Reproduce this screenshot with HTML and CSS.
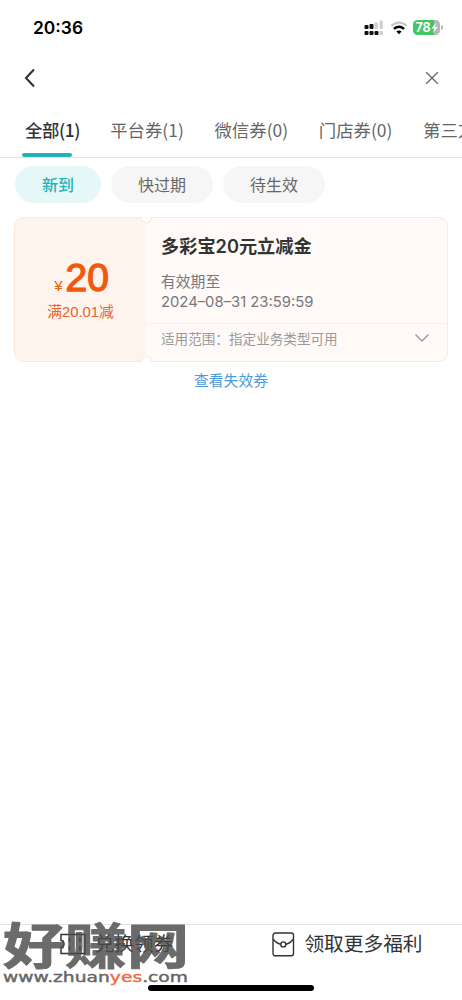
FILE: index.html
```html
<!DOCTYPE html>
<html lang="zh-CN">
<head>
<meta charset="UTF-8">
<title>卡券</title>
<link rel="stylesheet" href="styles.css">
</head>
<body>
<div class="screen">
  <header class="status">
    <span class="clock">20:36</span>
    <div class="indicators">
      <svg class="signal" width="20" height="16" viewBox="0 0 20 16">
        <g fill="#111"><rect x="0.5" y="5" width="4" height="4" rx="1"/><rect x="5.5" y="4" width="4" height="5" rx="1"/><rect x="0.5" y="11" width="4" height="4" rx="1"/><rect x="5.5" y="11" width="4" height="4" rx="1"/><rect x="10.5" y="11" width="4" height="4" rx="1"/></g>
        <g fill="#d0d0d0"><rect x="10.5" y="2.5" width="3.5" height="6.5" rx="1"/><rect x="15.5" y="0.5" width="3.5" height="8.5" rx="1"/><rect x="15.5" y="11" width="3.5" height="4" rx="1"/></g>
      </svg>
      <svg class="wifi" width="18" height="14" viewBox="0 0 18 14">
        <path d="M1.2 4.8Q9-1.8 16.8 4.8" fill="none" stroke="#c8c8c8" stroke-width="2.2"/>
        <path d="M3.9 7.9Q9 3.6 14.1 7.9" fill="none" stroke="#000" stroke-width="2.5"/>
        <path d="M6.4 10.4Q9 8.4 11.6 10.4L9 13.2Z" fill="#000"/>
      </svg>
      <div class="battery"><span>78</span>
        <svg width="7" height="10" viewBox="0 0 7 10"><path d="M4.8 0L0.5 5.6H3.1L2.2 10L6.7 4.1H4Z" fill="#fff"/></svg>
      </div>
      <i class="battery-tip"></i>
    </div>
  </header>
  <nav class="nav">
    <svg width="12" height="20" viewBox="0 0 12 20"><path d="M10 1.5L2 10L10 18.5" fill="none" stroke="#333" stroke-width="2.1"/></svg>
    <svg width="14" height="14" viewBox="0 0 14 14"><path d="M1.2 1.2L12.8 12.8M12.8 1.2L1.2 12.8" fill="none" stroke="#666" stroke-width="1.3"/></svg>
  </nav>
  <div class="tabs">
    <span class="tab tab-on">全部(1)</span>
    <span class="tab">平台券(1)</span>
    <span class="tab">微信券(0)</span>
    <span class="tab">门店券(0)</span>
    <span class="tab">第三方券(0)</span>
  </div>
  <div class="chips">
    <span class="chip chip-on">新到</span>
    <span class="chip">快过期</span>
    <span class="chip">待生效</span>
  </div>
  <main class="coupon">
    <section class="amount">
      <div class="price"><span class="yen">¥</span><span class="value">20</span></div>
      <div class="condition">满20.01减</div>
    </section>
    <section class="detail">
      <div class="info">
        <h1 class="title">多彩宝20元立减金</h1>
        <p class="valid">有效期至</p>
        <p class="valid date">2024–08–31 23:59:59</p>
      </div>
      <div class="scope"><span>适用范围：指定业务类型可用</span>
        <svg width="16" height="10" viewBox="0 0 16 10"><path d="M1.5 1.5L8 8L14.5 1.5" fill="none" stroke="#999" stroke-width="1.4"/></svg>
      </div>
    </section>
    <i class="notch notch-top"></i>
    <i class="notch notch-bottom"></i>
  </main>
  <a class="expired">查看失效券</a>
  <footer class="actions">
    <div class="action redeem">
      <svg width="26" height="22" viewBox="0 0 26 22"><path d="M1 1.5H25V20.5H1V14.5Q4 14.5 4 11Q4 7.5 1 7.5Z M9.5 5V9M9.5 13V17M20 4V9M20 13V18" fill="none" stroke="#333" stroke-width="1.5"/></svg>
      <span>兑换领券</span>
    </div>
    <div class="action">
      <svg width="23" height="25" viewBox="0 0 23 25"><g fill="none" stroke="#333" stroke-width="1.4"><rect x="1" y="1" width="20.5" height="22.8" rx="2.2"/><path d="M1.2 7.2Q5 11.8 9 12.2M13.6 12.2Q17.6 11.8 21.3 7.2"/><circle cx="11.3" cy="12.4" r="2.5"/></g></svg>
      <span>领取更多福利</span>
    </div>
  </footer>
  <svg class="watermark" width="192" height="72" viewBox="0 0 192 72">
    <text class="wm-name" x="3" y="44" textLength="186" lengthAdjust="spacingAndGlyphs">好赚网</text>
    <text class="wm-url" x="3" y="61.5" textLength="185" lengthAdjust="spacingAndGlyphs">www.zhuan<tspan class="wm-yes">yes</tspan>.com</text>
  </svg>
  <i class="home-bar"></i>
</div>
</body>
</html>
```
FILE: styles.css
```css
* { box-sizing: border-box; }
body { margin: 0; background: #fff; color: #666; font-family: Inter, "Noto Sans CJK SC", sans-serif; }
h1, p { margin: 0; }
svg { display: block; flex: none; }
.screen { position: relative; width: 462px; height: 1000px; overflow: hidden; display: flex; flex-direction: column; }
.status { height: 55px; flex: none; padding: 0 19px 0 33px; display: flex; align-items: center; justify-content: space-between; }
.clock { color: #000; font-size: 17.4px; font-weight: 600; line-height: 22px; padding-top: 1px; }
.indicators { display: flex; align-items: center; }
.wifi { margin: 0 5px 0 6px; }
.battery { width: 27px; height: 15px; border-radius: 4.5px; background: linear-gradient(90deg, #43c766 0 21px, #b5b9b6 21px); color: #fff; display: flex; align-items: center; justify-content: center; font-size: 12.5px; font-weight: 700; line-height: 15px; }
.battery-tip { width: 2px; height: 5px; margin-left: 1px; background: #bbb; border-radius: 0 2px 2px 0; }
.nav { height: 46px; flex: none; padding: 0 23px 0 24px; display: flex; align-items: center; justify-content: space-between; }
.tabs { height: 57px; flex: none; padding-left: 25px; display: flex; gap: 30.7px; border-bottom: 1px solid #e4e4e4; white-space: nowrap; font-family: "Noto Sans CJK SC", sans-serif; font-size: 17.4px; line-height: 57px; overflow: hidden; }
.tab { position: relative; flex: none; }
.tab-on { width: 54.5px; color: #333; font-weight: 500; letter-spacing: -0.4px; }
.tab-on::after { content: ""; position: absolute; left: -3px; bottom: 0; width: 50px; height: 4px; border-radius: 2px; background: #22b3b8; }
.chips { display: flex; gap: 10px; padding: 8px 15px 0; }
.chip { width: 102px; height: 37px; border-radius: 19px; background: #f6f6f6; text-align: center; font-size: 16px; line-height: 38px; }
.chip-on { width: 86px; background: #e6f7f7; color: #22b3b8; font-weight: 500; }
.coupon { position: relative; width: 434px; height: 145px; flex: none; margin: 14px 0 0 14px; border: 1px solid #fbe7dd; border-radius: 9px; background: #fffaf7; display: flex; }
.amount { width: 131px; padding-top: 38px; border-radius: 8px 0 0 8px; background: #fef3ed; color: #f1580f; text-align: center; font-family: "Liberation Sans", "Noto Sans CJK SC", sans-serif; }
.price { height: 44px; display: flex; align-items: baseline; justify-content: center; gap: 3px; padding-left: 2px; line-height: 44px; }
.yen { font-size: 15px; }
.value { font-size: 39px; -webkit-text-stroke: 1.3px #f1580f; }
.condition { color: #e8652b; font-size: 14.8px; line-height: 22px; margin-top: 1px; }
.detail { flex: 1; display: flex; flex-direction: column; }
.info { height: 106px; padding: 15px 0 0 15px; border-bottom: 1px solid #fceee8; }
.title { color: #333; font-size: 18.2px; font-weight: 600; line-height: 26px; white-space: nowrap; }
.valid { color: #777; font-size: 14.8px; line-height: 20px; }
.title + .valid { margin-top: 13px; }
.scope { display: flex; justify-content: space-between; align-items: center; height: 28px; padding: 0 17px 0 15px; color: #999; font-size: 13.6px; }
.notch { position: absolute; left: 126px; width: 11px; height: 6px; border: 1px solid #fbe7dd; background: #fff; }
.notch-top { top: -1px; border-top: 0; border-radius: 0 0 6px 6px; }
.notch-bottom { bottom: -1px; border-bottom: 0; border-radius: 6px 6px 0 0; }
.expired { margin-top: 8px; color: #4c9bdc; font-size: 14.8px; line-height: 23px; text-align: center; }
.actions { margin-top: auto; height: 76px; border-top: 1px solid #e4e4e4; display: grid; grid-template-columns: 231px 231px; color: #333; font-size: 19.7px; }
.action { height: 38px; display: flex; align-items: center; justify-content: center; gap: 9px; padding-left: 2px; }
.action span { margin-top: -3px; }
.watermark { position: absolute; left: 0; top: 920px; }
.wm-name { font: 700 49px "Noto Sans CJK SC", sans-serif; fill: #4b4b4b; stroke: #4b4b4b; stroke-width: 1; stroke-linejoin: round; opacity: 0.82; }
.wm-url { font: 13.5px "DejaVu Sans", sans-serif; fill: #666; stroke: #666; stroke-width: 0.4; }
.wm-yes { fill: #f26a43; stroke: #f26a43; }
.home-bar { position: absolute; left: 148px; bottom: 9px; width: 166px; height: 6px; border-radius: 3px; background: #000; }
```
